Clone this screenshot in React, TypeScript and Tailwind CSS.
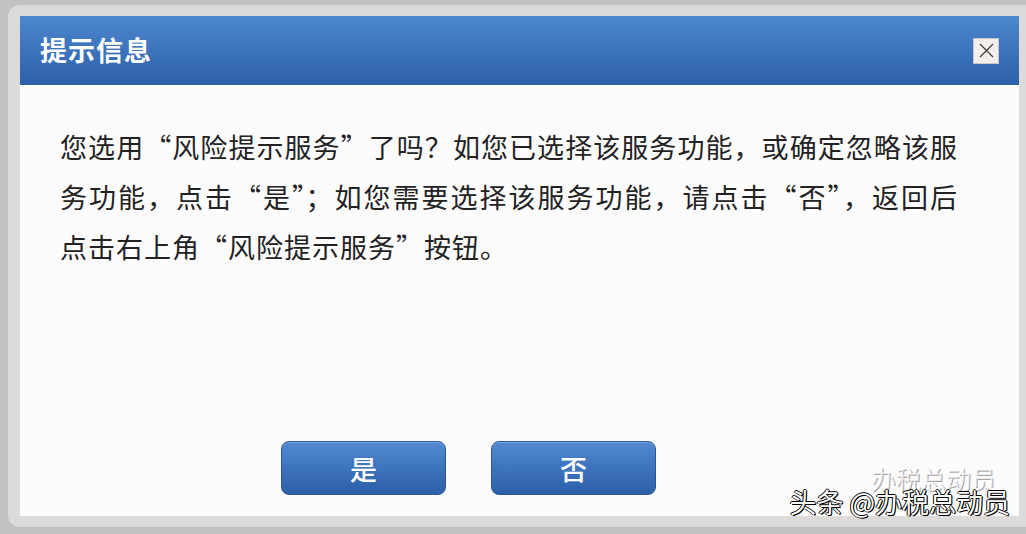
const lines = [
  "您选用“风险提示服务”了吗？如您已选择该服务功能，或确定忽略该服",
  "务功能，点击“是”；如您需要选择该服务功能，请点击“否”，返回后",
];
const lastLine = "点击右上角“风险提示服务”按钮。";

const cjk = { fontFamily: '"Noto Sans CJK SC", "Noto Sans", sans-serif' };

function DialogButton({ label }: { label: string }) {
  return (
    <button className="w-[165px] h-[54px] rounded-[8px] border border-[#2a5597] bg-gradient-to-b from-[#5089d2] to-[#2c5fa8] text-white text-[27px] font-medium leading-none shadow-[inset_0_1px_0_rgba(255,255,255,0.25)]">
      {label}
    </button>
  );
}

export default function App() {
  return (
    <div
      className="relative w-[1026px] h-[534px] overflow-hidden bg-[#c3c2c2] pt-[5px] pl-[8px] pb-[7px]"
      style={cjk}
    >
      <div className="h-full bg-[#dcdbda] rounded-l-[12px] pt-[11px] pl-[12px] pr-[7px]">
        <div className="w-[999px] h-[500px] flex flex-col bg-[#fdfcfd]">
          {/* title bar */}
          <div className="h-[69px] flex items-center justify-between pl-[20px] pr-[20px] bg-gradient-to-b from-[#4c88d0] to-[#2d5fa9]">
            <h1 className="text-white text-[27px] font-bold tracking-[1px]">提示信息</h1>
            <button className="w-[26px] h-[26px] flex items-center justify-center bg-[#f3efed] border border-[#c9c6c6]">
              <svg width="17" height="17" viewBox="0 0 17 17">
                <path d="M2 2 L15 15 M15 2 L2 15" stroke="#3a3a3a" strokeWidth="1.2" fill="none" />
              </svg>
            </button>
          </div>

          {/* message, first two lines stretched edge to edge */}
          <div className="flex-1 flex flex-col pt-[37px] pl-[40px] pb-[21px]">
            <div className="w-[897px] text-[27px] leading-[50px] text-[#222]">
              {lines.map((line) => (
                <p key={line} className="whitespace-nowrap text-justify [text-align-last:justify]">
                  {line}
                </p>
              ))}
              <p className="whitespace-nowrap tracking-[1px]">{lastLine}</p>
            </div>
            <div className="flex-1" />
            <div className="flex gap-[45px] pl-[221px]">
              <DialogButton label="是" />
              <DialogButton label="否" />
            </div>
          </div>
        </div>
      </div>

      {/* watermark */}
      <div className="absolute right-[30px] bottom-[37px] text-[25px] text-white/70 [text-shadow:1px_1px_0_rgba(0,0,0,0.35)] pointer-events-none">
        办税总动员
      </div>
      <div className="absolute right-[16px] bottom-[12px] text-[27px] text-white [text-shadow:1px_1px_0_#000,-1px_0_0_#000,0_-1px_0_#000,1px_0_0_#000] pointer-events-none">
        头条 @办税总动员
      </div>
    </div>
  );
}
